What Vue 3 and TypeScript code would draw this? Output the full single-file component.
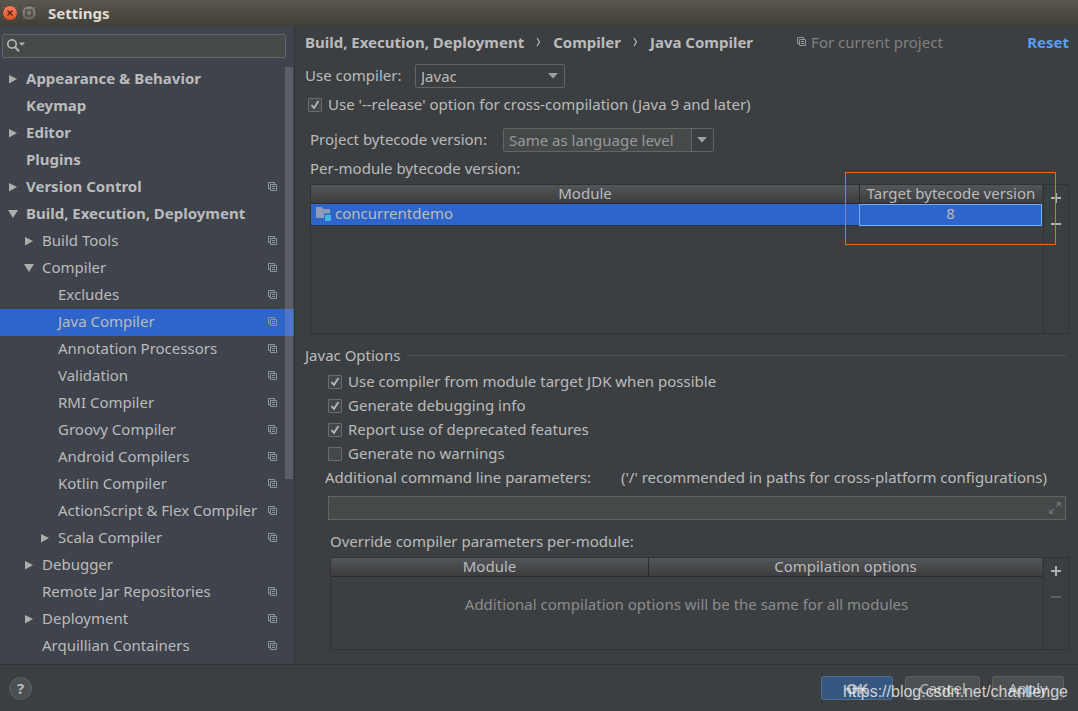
<script setup lang="ts">
import { ref } from 'vue'

interface TreeItem {
  label: string
  level: number
  state?: 'open' | 'closed'
  bold?: boolean
  project?: boolean
}

const items: TreeItem[] = [
  { label: 'Appearance & Behavior', level: 0, state: 'closed', bold: true },
  { label: 'Keymap', level: 0, bold: true },
  { label: 'Editor', level: 0, state: 'closed', bold: true },
  { label: 'Plugins', level: 0, bold: true },
  { label: 'Version Control', level: 0, state: 'closed', bold: true, project: true },
  { label: 'Build, Execution, Deployment', level: 0, state: 'open', bold: true },
  { label: 'Build Tools', level: 1, state: 'closed', project: true },
  { label: 'Compiler', level: 1, state: 'open', project: true },
  { label: 'Excludes', level: 2, project: true },
  { label: 'Java Compiler', level: 2, project: true },
  { label: 'Annotation Processors', level: 2, project: true },
  { label: 'Validation', level: 2, project: true },
  { label: 'RMI Compiler', level: 2, project: true },
  { label: 'Groovy Compiler', level: 2, project: true },
  { label: 'Android Compilers', level: 2, project: true },
  { label: 'Kotlin Compiler', level: 2, project: true },
  { label: 'ActionScript & Flex Compiler', level: 2, project: true },
  { label: 'Scala Compiler', level: 2, state: 'closed', project: true },
  { label: 'Debugger', level: 1, state: 'closed' },
  { label: 'Remote Jar Repositories', level: 1, project: true },
  { label: 'Deployment', level: 1, state: 'closed', project: true },
  { label: 'Arquillian Containers', level: 1, project: true },
]

const selected = ref('Java Compiler')
const search = ref('')
const compiler = ref('Javac')
const bytecode = ref('Same as language level')
const release = ref(true)
const params = ref('')
const options = ref([
  { id: 'opt-jdk', label: 'Use compiler from module target JDK when possible', on: true },
  { id: 'opt-debug', label: 'Generate debugging info', on: true },
  { id: 'opt-deprecated', label: 'Report use of deprecated features', on: true },
  { id: 'opt-nowarn', label: 'Generate no warnings', on: false },
])
</script>

<template>
  <div class="window">
    <header class="titlebar">
      <button class="wm close" aria-label="Close">
        <svg width="16" height="16" viewBox="0 0 16 16"><path d="M5.5 5.5l5 5M10.5 5.5l-5 5" stroke="#5a2413" stroke-width="1.3" fill="none" /></svg>
      </button>
      <button class="wm max" aria-label="Maximize">
        <svg width="16" height="16" viewBox="0 0 16 16"><path d="M5 5h6v6H5z" stroke="#3c3b37" stroke-width="1.2" fill="none" /></svg>
      </button>
      <h1>Settings</h1>
    </header>

    <div class="body">
      <aside class="sidebar">
        <div class="search">
          <svg width="20" height="16" viewBox="0 0 20 16" aria-hidden="true">
            <circle cx="6" cy="6" r="4.2" fill="none" stroke="#afb1b3" stroke-width="1.8" />
            <path d="M9 9l4 4.3" stroke="#afb1b3" stroke-width="2.2" />
            <path d="M13 4.500h6l-3 3.500z" fill="#afb1b3" />
          </svg>
          <input v-model="search" type="text" aria-label="Search settings" />
        </div>
        <div class="treewrap">
          <ul class="tree">
            <li v-for="item in items" :key="item.label">
              <button
                class="node"
                :class="['level' + item.level, { bold: item.bold, active: item.label === selected }]"
                @click="selected = item.label"
              >
                <span class="arrow">
                  <svg v-if="item.state === 'closed'" width="10" height="10" viewBox="0 0 10 10"><path d="M1 1l8 4-8 4.500z" fill="#adadad" /></svg>
                  <svg v-else-if="item.state === 'open'" width="10" height="10" viewBox="0 0 10 10"><path d="M0 1h10L5 9z" fill="#adadad" /></svg>
                </span>
                <span class="name">{{ item.label }}</span>
                <svg v-if="item.project" class="copy" width="10" height="10" viewBox="0 0 10 10">
                  <path d="M2 6.500H.5v-6h6V2M2.500 2.500h6v6h-6zM4 4.500h3M4 6.500h3" fill="none" stroke="currentColor" />
                </svg>
              </button>
            </li>
          </ul>
          <div class="thumb"></div>
        </div>
      </aside>

      <main class="content">
        <div class="crumbs">
          <nav>
            <span>Build, Execution, Deployment</span>
            <svg width="5" height="10" viewBox="0 0 5 10"><path d="M1 1l2.500 4L1 9" fill="none" stroke="#bbb" stroke-width="1.200" /></svg>
            <span>Compiler</span>
            <svg width="5" height="10" viewBox="0 0 5 10"><path d="M1 1l2.500 4L1 9" fill="none" stroke="#bbb" stroke-width="1.200" /></svg>
            <span>Java Compiler</span>
          </nav>
          <span class="scope">
            <svg class="copy" width="10" height="10" viewBox="0 0 10 10">
              <path d="M2 6.500H.5v-6h6V2M2.500 2.500h6v6h-6zM4 4.500h3M4 6.500h3" fill="none" stroke="currentColor" />
            </svg>
            For current project
          </span>
          <a class="reset" href="#">Reset</a>
        </div>

        <div class="row compiler">
          <label for="compiler">Use compiler:</label>
          <span class="combo">
            <select id="compiler" v-model="compiler">
              <option>Javac</option>
              <option>Eclipse</option>
            </select>
            <svg width="10" height="6" viewBox="0 0 10 6"><path d="M0 0h10L5 5.500z" fill="#9da0a2" /></svg>
          </span>
        </div>

        <div class="row release">
          <span class="check">
            <input id="release" v-model="release" type="checkbox" />
            <svg v-if="release" width="14" height="14" viewBox="0 0 14 14"><path d="M3.500 7l2.500 3 4.500-7" fill="none" stroke="#b4b6b7" stroke-width="1.900" /></svg>
          </span>
          <label for="release">Use '--release' option for cross-compilation (Java 9 and later)</label>
        </div>

        <div class="row bytecode">
          <label for="bytecode">Project bytecode version:</label>
          <span class="combo editable">
            <select id="bytecode" v-model="bytecode">
              <option>Same as language level</option>
              <option>8</option>
            </select>
            <svg width="10" height="6" viewBox="0 0 10 6"><path d="M0 0h10L5 5.500z" fill="#9da0a2" /></svg>
          </span>
        </div>

        <div class="caption">Per-module bytecode version:</div>
        <section class="panel modules">
          <div class="grid">
            <table>
              <thead>
                <tr><th>Module</th><th class="target">Target bytecode version</th></tr>
              </thead>
              <tbody>
                <tr class="picked">
                  <td>
                    <span class="module">
                      <svg width="16" height="14" viewBox="0 0 16 14">
                        <path d="M0 0h5.500L7.500 2H14v9H0z" fill="#8b9bb8" />
                        <path d="M8 6.500h8V14H8z" fill="#2f65ca" />
                        <path d="M9 8h6v6H9z" fill="#40b6e0" />
                      </svg>
                      concurrentdemo
                    </span>
                  </td>
                  <td class="editing">8</td>
                </tr>
              </tbody>
            </table>
          </div>
          <div class="tools">
            <button aria-label="Add module"><svg width="10" height="10" viewBox="0 0 10 10"><path d="M0 5h10M5 0v10" stroke="#afb1b3" stroke-width="2" /></svg></button>
            <button aria-label="Remove module"><svg width="10" height="10" viewBox="0 0 10 10"><path d="M0 5h10" stroke="#afb1b3" stroke-width="2" /></svg></button>
          </div>
          <div class="highlight"></div>
        </section>

        <h2><span>Javac Options</span></h2>
        <div v-for="opt in options" :key="opt.id" class="row option">
          <span class="check">
            <input :id="opt.id" v-model="opt.on" type="checkbox" />
            <svg v-if="opt.on" width="14" height="14" viewBox="0 0 14 14"><path d="M3.500 7l2.500 3 4.500-7" fill="none" stroke="#b4b6b7" stroke-width="1.900" /></svg>
          </span>
          <label :for="opt.id">{{ opt.label }}</label>
        </div>
        <div class="row params">
          <label for="params">Additional command line parameters:</label>
          <span>('/' recommended in paths for cross-platform configurations)</span>
        </div>
        <div class="field">
          <input id="params" v-model="params" type="text" />
          <button aria-label="Expand">
            <svg width="12" height="12" viewBox="0 0 12 12">
              <path d="M7 0h5v5zM0 7v5h5z" fill="#6b6e70" />
              <path d="M7 5l3-3M5 7l-3 3" stroke="#6b6e70" stroke-width="1.500" />
            </svg>
          </button>
        </div>

        <div class="caption override">Override compiler parameters per-module:</div>
        <section class="panel overrides">
          <div class="grid">
            <table>
              <thead>
                <tr><th class="mod">Module</th><th>Compilation options</th></tr>
              </thead>
            </table>
            <p>Additional compilation options will be the same for all modules</p>
          </div>
          <div class="tools">
            <button aria-label="Add override"><svg width="10" height="10" viewBox="0 0 10 10"><path d="M0 5h10M5 0v10" stroke="#afb1b3" stroke-width="2" /></svg></button>
            <button aria-label="Remove override" disabled><svg width="10" height="10" viewBox="0 0 10 10"><path d="M0 5h10" stroke="#5e6163" stroke-width="2" /></svg></button>
          </div>
        </section>
      </main>
    </div>

    <footer class="footer">
      <button class="help" aria-label="Help">?</button>
      <div class="actions">
        <button class="btn primary">OK</button>
        <button class="btn">Cancel</button>
        <button class="btn">Apply</button>
      </div>
      <span class="mark">https://blog.csdn.net/chanllenge</span>
    </footer>
  </div>
</template>

<style>
body {
  margin: 0;
  background: #3c3f41;
}
</style>

<style scoped>
* {
  box-sizing: border-box;
}
.window {
  display: flex;
  flex-direction: column;
  min-height: 100vh;
  background: #3c3f41;
  color: #bbbbbb;
  font-family: "Noto Sans", "Open Sans", sans-serif;
  font-size: 15px;
  line-height: 20px;
}
button,
input,
select {
  font: inherit;
  color: inherit;
  margin: 0;
  padding: 0;
  border: 0;
  background: none;
  appearance: none;
}
svg {
  display: block;
  flex: none;
}
.titlebar {
  display: flex;
  align-items: center;
  gap: 3px;
  height: 26px;
  padding-left: 2px;
  background: linear-gradient(#59564e, #403f39);
}
.wm {
  display: grid;
  place-items: center;
  width: 16px;
  height: 16px;
  border-radius: 8px;
  outline: 1px solid #35342f;
  outline-offset: -1px;
}
.close {
  background: linear-gradient(#f58463, #df5024);
}
.max {
  background: linear-gradient(#8b8980, #65635b);
}
h1 {
  margin: 0 0 0 8px;
  font-size: 15px;
  font-weight: 700;
  color: #dfdbd2;
}
.body {
  display: flex;
  flex: 1;
}
.sidebar {
  flex: none;
  display: flex;
  flex-direction: column;
  width: 295px;
  padding-top: 8px;
  background: #3f434c;
  border-right: 1px solid #313335;
}
.search {
  display: flex;
  align-items: center;
  gap: 2px;
  height: 24px;
  margin: 0 8px 8px 2px;
  padding-left: 3px;
  border: 1px solid #646464;
  border-radius: 2px;
  background: #45494a;
}
.search input {
  flex: 1;
  min-width: 0;
  outline: none;
}
.treewrap {
  position: relative;
  flex: 1;
}
.tree {
  margin: 0;
  padding: 0;
  list-style: none;
}
.node {
  display: flex;
  align-items: center;
  width: 100%;
  height: 27px;
  padding-right: 16px;
  padding-bottom: 1px;
  text-align: left;
}
.level0 {
  padding-left: 8px;
}
.level1 {
  padding-left: 24px;
}
.level2 {
  padding-left: 40px;
}
.arrow {
  flex: none;
  width: 18px;
}
.name {
  flex: 1;
  padding-bottom: 2px;
  white-space: nowrap;
}
.bold {
  font-weight: 700;
}
.active {
  background: #2f65ca;
}
.copy {
  color: #8d979e;
}
.thumb {
  position: absolute;
  top: 1px;
  right: 1px;
  width: 8px;
  height: 412px;
  background: rgba(166, 166, 166, 0.28);
}
.content {
  display: flex;
  flex: 1;
  flex-direction: column;
  min-width: 0;
  padding: 6px 9px 14px 10px;
}
.crumbs {
  display: flex;
  align-items: center;
  height: 20px;
  white-space: nowrap;
}
.crumbs nav {
  display: flex;
  align-items: center;
  gap: 12px;
  font-weight: 700;
}
.scope {
  display: flex;
  align-items: center;
  gap: 4px;
  margin-left: 44px;
  color: #808080;
}
.reset {
  margin-left: auto;
  font-weight: 700;
  color: #589df6;
  text-decoration: none;
}
.row {
  display: flex;
  align-items: center;
}
.row label {
  padding-bottom: 2px;
}
.compiler {
  margin-top: 12px;
}
.compiler label {
  width: 110px;
}
.combo {
  display: grid;
  align-items: center;
  width: 150px;
  height: 24px;
  border: 1px solid #646464;
  border-radius: 2px;
}
.combo > * {
  grid-area: 1 / 1;
}
.combo svg {
  justify-self: end;
  margin-right: 6px;
  pointer-events: none;
}
.combo select {
  width: 100%;
  height: 22px;
  padding-left: 5px;
}
.release {
  gap: 6px;
  height: 20px;
  margin: 7px 0 0 3px;
}
.check {
  display: grid;
  flex: none;
}
.check > * {
  grid-area: 1 / 1;
}
.check input {
  width: 14px;
  height: 14px;
  border: 1px solid #6b6b6b;
  border-radius: 1px;
  background: #43494a;
}
.check svg {
  pointer-events: none;
}
.bytecode {
  margin: 13px 0 0 5px;
}
.bytecode label {
  width: 193px;
}
.editable {
  width: 211px;
  background: linear-gradient(to left, #3c3f41 21px, #646464 21px, #646464 22px, #45494a 22px);
}
.editable select {
  color: #999999;
}
.caption {
  margin: 6px 0 6px 5px;
}
.panel {
  position: relative;
  display: flex;
  border: 1px solid #323232;
}
.modules {
  flex: 1;
  min-height: 100px;
  margin-left: 5px;
}
.grid {
  flex: 1;
  min-width: 0;
  padding-right: 1px;
}
table {
  width: 100%;
  border-collapse: separate;
  border-spacing: 0;
  table-layout: fixed;
}
thead tr {
  background: linear-gradient(#525658, #3b3b3d);
}
th {
  height: 19px;
  padding: 0 0 1px;
  border-bottom: 1px solid #2b2b2b;
  font-weight: 400;
  line-height: 17px;
  white-space: nowrap;
}
th + th {
  border-left: 1px solid #2b2b2b;
}
.target {
  width: 183px;
}
.mod {
  width: 317px;
}
td {
  height: 22px;
  padding: 0 0 2px;
  border-bottom: 1px solid #26334d;
  line-height: 19px;
}
.picked {
  background: #2f65ca;
}
.module {
  display: flex;
  align-items: center;
  gap: 3px;
  padding-left: 5px;
}
.editing {
  outline: 1px solid #6cb4f5;
  outline-offset: -1px;
  text-align: center;
}
.tools {
  display: flex;
  flex: none;
  flex-direction: column;
  align-items: center;
  width: 25px;
  border-left: 1px solid #323232;
}
.tools button {
  display: grid;
  place-items: center;
  width: 24px;
  height: 26px;
}
.highlight {
  position: absolute;
  top: -13px;
  right: 12px;
  width: 211px;
  height: 73px;
  border: 1px solid #f0642f;
  pointer-events: none;
}
h2 {
  display: flex;
  align-items: center;
  gap: 7px;
  margin: 11px 3px 5px 0;
  font-size: 15px;
  font-weight: 400;
}
h2::after {
  content: "";
  flex: 1;
  height: 1px;
  background: #515355;
}
.option {
  gap: 6px;
  height: 24px;
  margin-left: 23px;
}
.params {
  gap: 30px;
  height: 24px;
  margin-left: 20px;
  white-space: nowrap;
}
.params span {
  padding-bottom: 2px;
}
.field {
  display: flex;
  align-items: center;
  height: 24px;
  margin: 6px 3px 0 23px;
  padding-right: 4px;
  border: 1px solid #646464;
  background: #45494a;
}
.field input {
  flex: 1;
  min-width: 0;
  outline: none;
}
.override {
  margin: 11px 0 6px 25px;
}
.overrides {
  min-height: 93px;
  margin-left: 25px;
}
.overrides p {
  margin: 17px 0 0;
  text-align: center;
  color: #8c8c8c;
}
.footer {
  position: relative;
  display: flex;
  align-items: center;
  justify-content: space-between;
  height: 47px;
  padding: 0 14px 0 9px;
  border-top: 1px solid #323232;
}
.help {
  width: 23px;
  height: 23px;
  border: 1px solid #5e6060;
  border-radius: 12px;
  background: #4c5052;
  font-weight: 700;
  line-height: 20px;
}
.actions {
  display: flex;
  gap: 12px;
}
.btn {
  width: 72px;
  height: 24px;
  border: 1px solid #5e6060;
  border-radius: 3px;
  background: #4c5052;
}
.btn:nth-child(2) {
  width: 75px;
}
.primary {
  border-color: #4c708c;
  background: #365880;
  font-weight: 700;
}
.mark {
  position: absolute;
  right: 10px;
  bottom: 9px;
  font-family: "Liberation Sans", sans-serif;
  font-size: 16px;
  color: rgba(255, 255, 255, 0.75);
  pointer-events: none;
}
</style>
